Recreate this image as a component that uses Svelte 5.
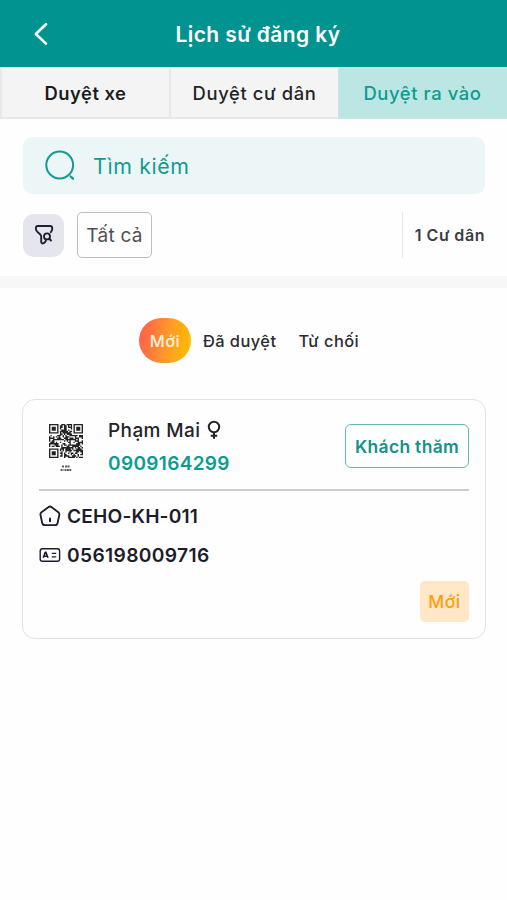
<script lang="ts">
  type Tab = { label: string; kind: string };

  const tabs: Tab[] = [
    { label: 'Duyệt xe', kind: 'vehicle' },
    { label: 'Duyệt cư dân', kind: 'resident' },
    { label: 'Duyệt ra vào', kind: 'access' },
  ];
  const filters = ['Mới', 'Đã duyệt', 'Từ chối'];

  let activeTab = $state('access');
  let activeFilter = $state('Mới');

  const visitor = {
    name: 'Phạm Mai',
    phone: '0909164299',
    unit: 'CEHO-KH-011',
    idCard: '056198009716',
    type: 'Khách thăm',
    status: 'Mới',
  };

  const QR_SIZE = 25;

  // Finder squares in three corners, hashed modules elsewhere
  function isDark(x: number, y: number): boolean {
    const corners = [[0, 0], [QR_SIZE - 7, 0], [0, QR_SIZE - 7]];
    for (const [cx, cy] of corners) {
      const dx = x - cx;
      const dy = y - cy;
      if (dx >= -1 && dx <= 7 && dy >= -1 && dy <= 7) {
        const ring = Math.max(Math.abs(dx - 3), Math.abs(dy - 3));
        return ring === 3 || ring <= 1;
      }
    }
    const n = Math.sin(x * 12.9898 + y * 78.233) * 43758.5453;
    return n - Math.floor(n) > 0.42;
  }

  let qrPath = '';
  for (let y = 0; y < QR_SIZE; y++) {
    for (let x = 0; x < QR_SIZE; x++) {
      if (isDark(x, y)) qrPath += `M${x} ${y}h1v1h-1z`;
    }
  }
</script>

<div class="screen">
  <header class="header">
    <button class="back" aria-label="Quay lại">
      <svg width="16" height="24" viewBox="0 0 16 24" fill="none">
        <path d="M13 2.2L2.8 12L13 21.6" stroke="currentColor" stroke-width="2.6" stroke-linecap="round" stroke-linejoin="round" />
      </svg>
    </button>
    <h1>Lịch sử đăng ký</h1>
  </header>

  <nav class="tabs">
    {#each tabs as tab}
      <button class="tab {tab.kind}" class:active={activeTab === tab.kind} onclick={() => (activeTab = tab.kind)}>
        {tab.label}
      </button>
    {/each}
  </nav>

  <section class="tools">
    <div class="search">
      <svg width="32" height="32" viewBox="0 0 32 32" fill="none" stroke="currentColor" stroke-width="2" stroke-linecap="round">
        <circle cx="15.7" cy="15" r="13.4" />
        <path d="M26.6 26.5L29 28.7" stroke-width="2.3" />
      </svg>
      <span>Tìm kiếm</span>
    </div>

    <div class="filter-row">
      <button class="filter-btn" aria-label="Bộ lọc">
        <svg width="20" height="22" viewBox="0 0 20 22" fill="none" stroke="currentColor" stroke-width="1.9" stroke-linecap="round" stroke-linejoin="round">
          <path d="M16.8 8.2C18 6.9 18.2 5.7 18.2 4.4V3.8C18.2 2.7 17.4 2 16.3 2H3.7C2.6 2 1.9 2.7 1.9 3.8V4.8C1.9 5.8 2.5 6.9 3.2 7.6L6 10.2C6.8 11 7.2 11.9 7.2 12.9V17.8C7.2 19.2 8.3 20 9.4 19.3L10.8 18.4C11.5 17.9 11.8 17.3 11.8 16.6" />
          <circle cx="13" cy="12.4" r="3" />
          <path d="M15.5 15L17 16.5" />
        </svg>
      </button>
      <button class="all-btn">Tất cả</button>
      <span class="count">1 Cư dân</span>
    </div>
  </section>

  <div class="pills">
    {#each filters as filter}
      <button class="pill" class:selected={activeFilter === filter} onclick={() => (activeFilter = filter)}>{filter}</button>
    {/each}
  </div>

  <article class="card">
    <div class="card-top">
      <div class="qr">
        <svg width="34" height="34" viewBox="0 0 25 25">
          <path d={qrPath} fill="#222" />
        </svg>
        <svg width="12" height="7" viewBox="0 0 12 7" stroke="#444" stroke-width="1.8" opacity="0.85">
          <path d="M2 1.5h2M5 1.5h5" stroke-dasharray="2 0.4" />
          <path d="M0.5 5h3M4.5 5h7" stroke-dasharray="2 0.4" />
        </svg>
      </div>
      <div class="person">
        <div class="name">
          {visitor.name}
          <svg width="14" height="20" viewBox="0 0 14 20" fill="none" stroke="currentColor" stroke-width="2">
            <circle cx="7" cy="7" r="5.2" />
            <path d="M7 12.2V18.8M3.8 15.8H10.2" />
          </svg>
        </div>
        <div class="phone">{visitor.phone}</div>
      </div>
      <span class="type">{visitor.type}</span>
    </div>

    <div class="info">
      <svg width="22" height="22" viewBox="0 0 22 22" fill="none" stroke="currentColor" stroke-width="1.8" stroke-linejoin="round" stroke-linecap="round">
        <path d="M9.3 2.2L2.5 7.3C1.6 8 1.2 8.9 1.5 10L3.2 18C3.5 19.3 4.6 20.2 5.9 20.2H15.9C17.2 20.2 18.3 19.3 18.6 18L20.3 10C20.6 8.9 20.2 8 19.3 7.3L12.7 2.2C11.7 1.4 10.3 1.4 9.3 2.2Z" />
        <path d="M11 13.5V16.2" stroke-width="2" />
      </svg>
      <span>{visitor.unit}</span>
    </div>
    <div class="info id-card">
      <svg width="22" height="22" viewBox="0 0 22 22" fill="none" stroke="currentColor" stroke-linejoin="round">
        <rect x="1.2" y="4.7" width="19.4" height="12.6" rx="2.2" stroke-width="1.4" />
        <path d="M4.2 13.8L6.3 8.4H6.9L9 13.8M5 12.2H8.2" stroke-width="1.6" />
        <path d="M12.8 9.3H17.2M12.8 12.9H17.2" stroke-width="1.3" />
      </svg>
      <span>{visitor.idCard}</span>
    </div>

    <span class="status">{visitor.status}</span>
  </article>
</div>

<style>
  :global(body) {
    margin: 0;
    background: #fefefe;
  }

  .screen {
    width: 100%;
    min-height: 900px;
    background: #fefefe;
    font-family: Inter, 'Noto Sans', sans-serif;
    color: #242428;
  }

  button {
    margin: 0;
    padding: 0;
    border: 0;
    background: none;
    font: inherit;
    color: inherit;
  }

  svg {
    display: block;
    flex-shrink: 0;
  }

  /* Header */
  .header {
    display: grid;
    grid-template-columns: 82px 1fr 73px;
    align-items: center;
    height: 67px;
    padding-top: 1px;
    box-sizing: border-box;
    background: #00938f;
    color: #fff;
  }

  .back {
    justify-self: start;
    margin-left: 33px;
  }

  h1 {
    margin: 0;
    padding-top: 1px;
    text-align: center;
    font-size: 21px;
    font-weight: 600;
    letter-spacing: 0.4px;
  }

  /* Tabs */
  .tabs {
    display: grid;
    grid-template-columns: 169px 169px 1fr;
    height: 52px;
  }

  .tab {
    box-sizing: border-box;
    padding-top: 1px;
    border: solid #e8e8e9;
    border-width: 1px 0 2px 2px;
    background: #f4f4f5;
    font-size: 18.4px;
    font-weight: 500;
    letter-spacing: 0.6px;
  }

  .tab.vehicle {
    font-weight: 600;
    color: #1c1c1e;
    letter-spacing: 0.5px;
  }

  .tab.active {
    padding-right: 2px;
    background: #bce6e4;
    border-color: #c5e5e4;
    color: #0b9c90;
  }

  /* Search and filters */
  .tools {
    padding: 18px 22px 18px 23px;
    border-bottom: 12px solid #f7f7f8;
  }

  .search {
    display: flex;
    align-items: center;
    gap: 17px;
    height: 57px;
    padding-left: 21px;
    border-radius: 9px;
    background: #ecf6f7;
    color: #129b93;
    font-size: 21.3px;
    letter-spacing: 0.65px;
  }

  .filter-row {
    display: flex;
    align-items: center;
    height: 46px;
    margin-top: 18px;
  }

  .filter-btn {
    display: flex;
    align-items: center;
    justify-content: center;
    width: 41px;
    height: 43px;
    border-radius: 11px;
    background: #e4e5ed;
    color: #1f2030;
  }

  .all-btn {
    width: 75px;
    height: 46px;
    margin-left: 13px;
    border: 1.5px solid #bdbdbf;
    border-radius: 5px;
    font-size: 19px;
    color: #505054;
    letter-spacing: 0.25px;
  }

  .count {
    display: flex;
    align-items: center;
    height: 46px;
    margin-left: auto;
    padding-left: 12px;
    border-left: 1px solid #e6e7e9;
    font-size: 16px;
    font-weight: 600;
    color: #3b3d42;
    letter-spacing: 0.55px;
  }

  /* Status pills */
  .pills {
    display: flex;
    align-items: center;
    height: 45px;
    margin: 30px 0 0 139px;
    font-size: 16.4px;
    font-weight: 500;
  }

  .pill {
    margin-right: 22px;
    letter-spacing: 0.45px;
    color: #2b2b2e;
  }

  .pill.selected {
    width: 52px;
    height: 45px;
    margin-right: 12px;
    border-radius: 23px;
    background: linear-gradient(100deg, #ff5f4c 5%, #ff9a28 55%, #ffbd00 95%);
    color: #fff0dc;
  }

  /* Visitor card */
  .card {
    display: flex;
    flex-direction: column;
    box-sizing: border-box;
    height: 240px;
    margin: 36px 21px 0 22px;
    padding: 0 16px 16px;
    border: 1.5px solid #e2e2e4;
    border-radius: 13px;
  }

  .card-top {
    display: flex;
    align-items: center;
    height: 89px;
    border-bottom: 2px solid #cdcdcf;
  }

  .qr {
    display: flex;
    flex-direction: column;
    align-items: center;
    gap: 7px;
    width: 34px;
    margin: 7px 25px 0 10px;
  }

  .person {
    padding-top: 4px;
    font-size: 19px;
    font-weight: 500;
    line-height: 33px;
  }

  .name {
    display: flex;
    align-items: center;
    gap: 7px;
    letter-spacing: 0.4px;
  }

  .phone {
    color: #0b9c90;
    font-weight: 600;
    letter-spacing: 0.35px;
  }

  .type {
    display: flex;
    align-items: center;
    justify-content: center;
    box-sizing: border-box;
    width: 124px;
    height: 44px;
    margin: 3px 0 0 auto;
    border: 1.5px solid #62bbb3;
    border-radius: 6px;
    color: #149188;
    font-size: 17.4px;
    font-weight: 600;
    letter-spacing: 0.35px;
  }

  .info {
    display: flex;
    align-items: center;
    gap: 6px;
    height: 39px;
    margin-top: 5px;
    font-size: 19.2px;
    font-weight: 600;
    color: #1d1c2c;
    letter-spacing: 0.15px;
  }

  .info.id-card {
    margin-top: 0;
    letter-spacing: 0.35px;
  }

  .status {
    display: flex;
    align-items: center;
    justify-content: center;
    align-self: flex-end;
    width: 49px;
    height: 41px;
    margin-top: auto;
    border-radius: 5px;
    background: #ffe7c8;
    color: #ff9d0a;
    font-size: 17.5px;
    font-weight: 500;
    letter-spacing: 0.6px;
  }
</style>
